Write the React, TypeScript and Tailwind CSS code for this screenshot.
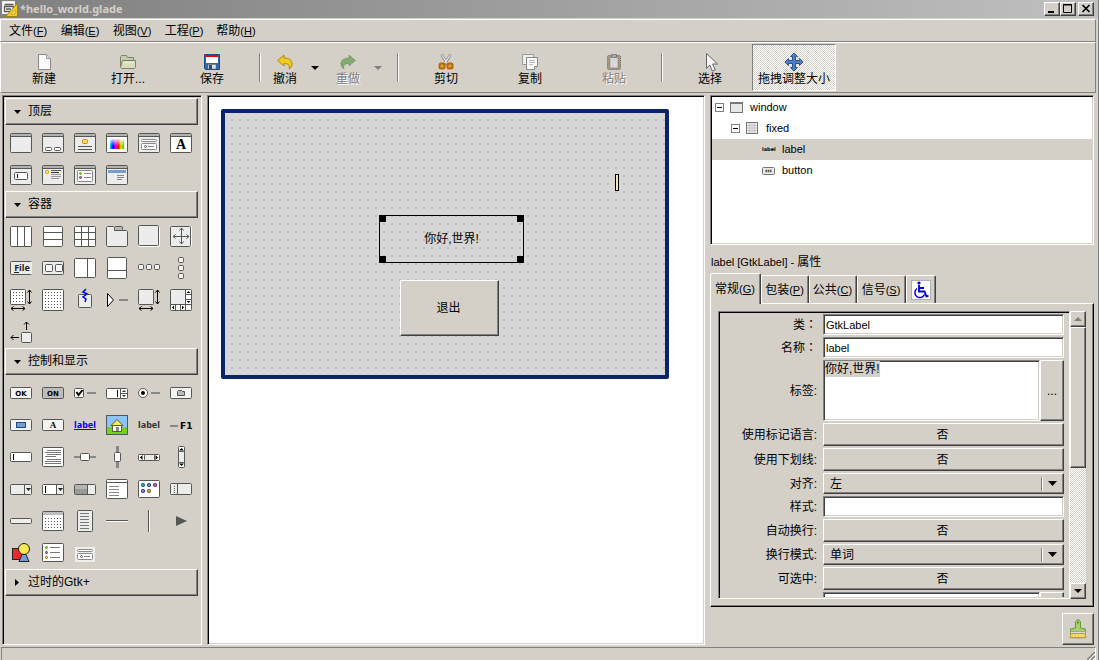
import { useEffect, useRef } from 'react';
import type { ReactNode } from 'react';

const INK = '#555753';
const FACE = '#ececec';

const outset =
  'border border-t-white border-l-white border-r-[#404040] border-b-[#404040] shadow-[inset_-1px_-1px_0_#808080] bg-[#d4d0c8]';
const inset =
  'border border-t-[#808080] border-l-[#808080] border-r-white border-b-white shadow-[inset_1px_1px_0_#000,inset_-1px_-1px_0_#d4d0c8]';
const bar =
  'border border-t-white border-l-white border-r-[#808080] border-b-[#808080]';
const checker =
  'bg-[repeating-conic-gradient(#ffffff_0_25%,#d4d0c8_0_50%)] bg-[length:2px_2px]';

/* ---------- drawing helpers ---------- */

type BoxProps = { x?: number; y?: number; w?: number; h?: number; f?: string; s?: string };
function Box({ x = 0, y = 0, w = 22, h = 22, f = FACE, s = INK }: BoxProps) {
  return <rect x={x + 0.5} y={y + 0.5} width={w - 1} height={h - 1} rx="1" fill={f} stroke={s} />;
}
function Fill({ x, y, w, h, f = INK }: { x: number; y: number; w: number; h: number; f?: string }) {
  return <rect x={x} y={y} width={w} height={h} fill={f} shapeRendering="crispEdges" />;
}
function Rows({ x, w, ys, f = INK }: { x: number; w: number; ys: number[]; f?: string }) {
  return <>{ys.map((y) => <Fill key={y} x={x} y={y} w={w} h={1} f={f} />)}</>;
}
function Cols({ y, h, xs, f = INK }: { y: number; h: number; xs: number[]; f?: string }) {
  return <>{xs.map((x) => <Fill key={x} x={x} y={y} w={1} h={h} f={f} />)}</>;
}
function Dots({ xs, ys, f = INK }: { xs: number[]; ys: number[]; f?: string }) {
  return <>{xs.flatMap((x) => ys.map((y) => <Fill key={`${x}-${y}`} x={x} y={y} w={1} h={1} f={f} />))}</>;
}
function Word({ x, y, size, f = '#000', children, serif }: { x: number; y: number; size: number; f?: string; children: string; serif?: boolean }) {
  return (
    <text x={x} y={y} fontSize={size} fontWeight="bold" fill={f} textAnchor="middle" fontFamily={serif ? 'Liberation Serif, serif' : 'DejaVu Sans, sans-serif'}>
      {children}
    </text>
  );
}
function Tag({ x = 11, y = 14, f, children }: { x?: number; y?: number; f: string; children: string }) {
  return (
    <text x={x} y={y} fontSize="9" fontWeight="bold" fill={f} textAnchor="middle" fontFamily="Noto Sans, sans-serif">
      {children}
    </text>
  );
}
function Win({ f = FACE, children }: { f?: string; children?: ReactNode }) {
  return (
    <>
      <Box y={1} h={20} f={f} />
      <Fill x={1} y={2} w={20} h={2} f="#b2b2b2" />
      <Fill x={1} y={4} w={20} h={1} />
      {children}
    </>
  );
}
const stroke = { fill: 'none', stroke: '#000', strokeWidth: 1 };
const resizeArrows = (
  <path {...stroke} d="M19.5 1v14M17.5 3.5l2-2.500 2 2.500M17.500 12.500l2 2.500 2-2.500M1 19.500h14M3.500 17.500l-2.500 2 2.500 2M12.500 17.500l2.500 2-2.500 2" />
);

/* ---------- palette icons ---------- */

const toplevels: [string, ReactNode][] = [
  ['窗口', <Win />],
  ['对话框', <Win><Box x={3} y={15} w={7} h={4} f="#fff" /><Box x={12} y={15} w={7} h={4} f="#fff" /></Win>],
  ['关于对话框', <Win><Box x={8} y={7} w={6} h={5} f="#fce94f" s="#e0761a" /><Rows x={4} w={14} ys={[14, 17]} /></Win>],
  ['颜色选择对话框', (
    <Win f="#fff">
      <defs>
        <linearGradient id="hue">
          <stop offset="0" stopColor="#00e0e0" /><stop offset=".2" stopColor="#0000ff" /><stop offset=".4" stopColor="#e000e0" />
          <stop offset=".6" stopColor="#ff0000" /><stop offset=".78" stopColor="#f0e000" /><stop offset="1" stopColor="#00e000" />
        </linearGradient>
        <linearGradient id="fade" x2="0" y2="1"><stop offset="0" stopColor="#fff" stopOpacity=".85" /><stop offset=".7" stopColor="#fff" stopOpacity="0" /></linearGradient>
      </defs>
      <rect x="4" y="7" width="14" height="10" fill="url(#hue)" /><rect x="4" y="7" width="14" height="10" fill="url(#fade)" />
    </Win>
  )],
  ['文件选择对话框', <Win><Box x={3} y={7} w={16} h={3} f="#fff" s="#8a8a8a" /><Box x={3} y={11} w={16} h={7} f="#fff" s="#8a8a8a" /><Box x={6} y={13} w={3} h={3} f="#fff" /><Fill x={10} y={14} w={6} h={1} f="#888" /></Win>],
  ['字体选择对话框', <Win f="#fff"><Word x={11} y={17} size={14} serif>A</Word></Win>],
  ['输入对话框', <Win><Box x={4} y={8} w={14} h={8} f="#fff" /><Fill x={7} y={10} w={1} h={4} f="#000" /></Win>],
  ['消息对话框', <Win><Box x={3} y={6} w={4} h={4} f="#fce94f" s="#c4a000" /><Rows x={9} w={10} ys={[6]} /><Fill x={9} y={8} w={8} h={1} f="#333" /><Rows x={9} w={10} ys={[10, 12]} f="#999" /><Fill x={9} y={14} w={8} h={1} f="#999" /></Win>],
  ['最近文件对话框', <Win><Box x={3} y={6} w={16} h={12} f="#fff" s="#888" /><Box x={5} y={8} w={3} h={3} f="#8ae234" s="#4e9a06" /><Box x={5} y={12} w={3} h={3} f="#ad7fa8" s="#5c3566" /><Rows x={10} w={7} ys={[9, 13]} f="#888" /></Win>],
  ['向导', <Win><Fill x={2} y={6} w={18} h={3} f="#729fcf" /><Rows x={11} w={7} ys={[11, 13]} f="#888" /><Fill x={11} y={15} w={5} h={1} f="#888" /></Win>],
];

const smallBoxes = [0, 8, 16];

const containers: [string, ReactNode][] = [
  ['水平框', <><Box y={1} h={21} f="#fff" /><Cols y={1} h={20} xs={[7, 14]} /></>],
  ['垂直框', <><Box x={1} y={1} w={20} h={21} f="#fff" /><Rows x={1} w={20} ys={[7, 14]} /></>],
  ['表格', <><Box y={1} h={21} f="#fff" /><Cols y={1} h={20} xs={[7, 14]} /><Rows x={1} w={20} ys={[7, 14]} /></>],
  ['笔记本', <><Box x={8} y={1} w={9} h={5} f="#b8b8b8" /><path d="M.5 20.500V2.500l1-1h6l1 1v3h12l1 1v14l-1 1h-19z" fill={FACE} stroke={INK} /></>],
  ['框架', <><Box y={1} w={22} h={21} f="#fff" s="#fff" /><Box y={0} w={21} h={21} /></>],
  ['固定', <><Box y={1} w={22} h={21} f="#fff" s="#fff" /><Box w={21} h={21} y={1} /><path fill="none" stroke={INK} d="M11.500 3v16M3 11.500h16M9.500 5.500l2-2.500 2 2.500M9.500 16.500l2 2.500 2-2.500M5.500 9.500l-2.500 2 2.500 2M16.500 9.500l2.500 2-2.500 2" /></>],
  ['菜单条', <><Box y={4} h={14} /><Fill x={21} y={5} w={1} h={12} f={FACE} /><Tag x={12} f="#222">File</Tag><Fill x={4} y={15} w={5} h={1} f="#222" /></>],
  ['工具条', <><Box y={4} h={14} /><Box x={3} y={7} w={8} h={8} f="#f5f5f5" /><Box x={13} y={7} w={8} h={8} f="#f5f5f5" /></>],
  ['水平窗格', <><Box y={1} h={20} f="#fff" /><Cols y={1} h={20} xs={[13]} /></>],
  ['垂直窗格', <><Box x={1} w={20} f="#fff" /><Rows x={1} w={20} ys={[13]} /></>],
  ['水平按钮框', <>{smallBoxes.map((p) => <Box key={p} x={p} y={7} w={6} h={6} f="#f5f5f5" />)}</>],
  ['垂直按钮框', <>{smallBoxes.map((p) => <Box key={p} x={8} y={p} w={6} h={6} f="#f5f5f5" />)}</>],
  ['布局', <><Box w={16} h={16} f="#fff" /><Dots xs={[3, 6, 9, 12]} ys={[3, 6, 9, 12]} />{resizeArrows}</>],
  ['固定点阵', <><Box f="#fff" /><Dots xs={[3, 6, 9, 12, 15, 18]} ys={[3, 6, 9, 12, 15, 18]} /></>],
  ['事件框', <><Box x={4} y={5} w={14} h={14} /><path fill="none" stroke="#00f" strokeWidth="1.500" d="M12 0L9 3l4 2-4 3 3 2-1 3" /></>],
  ['扩展器', <><path d="M1.500 4.500v13l6-6.500z" fill="#fff" stroke="#000" /><Fill x={13} y={10} w={9} h={2} f="#888" /></>],
  ['视口', <><Box w={16} h={16} />{resizeArrows}</>],
  ['滚动窗口', <><Box f="#fff" /><Fill x={1} y={1} w={14} h={14} f={FACE} /><Fill x={15} y={1} w={1} h={20} /><Fill x={1} y={15} w={20} h={1} /><Rows x={16} w={5} ys={[5, 10]} /><Cols y={16} h={5} xs={[5, 10]} /><path d="M16.500 4h4l-2-2zM16.500 12h4l-2 2zM4 16.500v4l-2-2zM12 16.500v4l2-2z" fill="#000" /></>],
  ['对齐', <><Box x={11} y={11} w={11} h={11} /><path {...stroke} d="M16.500 1v8M14 3.500L16.500 1 19 3.500M1 16.500h8M3.500 14L1 16.500 3.500 19" /></>],
];

const rasters: [number, number, string, string][] = [
  [3, 5, '#20a0a0', '#0a6060'], [9, 5, '#5a8ac8', '#102a80'], [15, 5, '#b060c0', '#5c1066'], [3, 11, '#7080e0', '#1020a0'], [9, 11, '#c8a060', '#6a4a10'],
];

const controls: [string, ReactNode][] = [
  ['按钮', <><Box y={5} h={12} f="#f4f4f4" /><Word x={11} y={14} size={7}>OK</Word></>],
  ['开关按钮', <><Box y={5} h={12} f="#bdbdbd" /><Word x={11} y={14} size={7}>ON</Word></>],
  ['复选按钮', <><Box y={6} w={10} h={10} f="#fff" /><path d="M2.500 10l2 3 4-5" fill="none" stroke="#000" strokeWidth="2" /><Fill x={13} y={10} w={9} h={2} f="#888" /></>],
  ['微调按钮', <><Box y={6} h={11} f="#fff" /><Cols y={7} h={9} xs={[14]} /><Fill x={11} y={8} w={1} h={7} f="#000" /><Fill x={15} y={11} w={6} h={1} /><path d="M16 10h4l-2-2zM16 13h4l-2 2z" fill="#333" /></>],
  ['单选按钮', <><circle cx="5" cy="11" r="4.500" fill="#fff" stroke={INK} /><circle cx="5" cy="11" r="2" /><Fill x={13} y={10} w={9} h={2} f="#888" /></>],
  ['文件选择按钮', <><Box y={5} h={12} f="#f4f4f4" /><path d="M7.500 13.500v-4l1-1h3l1 1h2v4z" fill="#bbb" stroke={INK} /></>],
  ['颜色按钮', <><Box y={5} h={12} f="#f4f4f4" /><rect x="6.500" y="8.500" width="9" height="5" fill="#729fcf" stroke="#204a87" /></>],
  ['字体按钮', <><Box y={5} h={12} f="#f4f4f4" /><Word x={11} y={14} size={9} serif>A</Word></>],
  ['链接按钮', <><Tag f="#00f">label</Tag><Fill x={0} y={15} w={22} h={1} f="#00f" /></>],
  ['图像', <><rect x=".500" y="1.500" width="21" height="19" fill="#8cc4ff" stroke={INK} /><Fill x={1} y={13} w={20} h={7} f="#73d216" /><path d="M6.500 11.500h9v6h-9z" fill="#fff" stroke={INK} /><path d="M5 11.500L11 5.500l6 6z" fill="#fce94f" stroke={INK} /><Fill x={10} y={13} w={3} h={4} f="#888" /></>],
  ['标签', <Tag f="#333">label</Tag>],
  ['快捷键标签', <><Fill x={0} y={11} w={8} h={2} f="#888" /><text x="10" y="15" fontSize="9" fontWeight="bold" fontFamily="DejaVu Sans, sans-serif">F1</text></>],
  ['文本输入', <><Box y={6} h={10} f="#fff" /><Fill x={3} y={8} w={1} h={6} f="#000" /></>],
  ['文本视图', <><Box y={1} h={20} f="#fff" /><Rows x={5} w={14} ys={[4, 8, 13]} f="#777" /><Rows x={3} w={16} ys={[6, 15, 17]} f="#777" /><Rows x={3} w={11} ys={[10]} f="#777" /></>],
  ['水平刻度', <><Fill x={0} y={10} w={22} h={2} f="#888" /><Box x={6} y={7} w={10} h={8} f="#fff" /></>],
  ['垂直刻度', <><Fill x={10} y={0} w={3} h={22} f="#888" /><Box x={8} y={6} w={7} h={10} f="#fff" /></>],
  ['水平滚动条', <><Box y={8} h={7} f="#fff" /><Box x={6} y={8} w={11} h={7} /><path d="M4.500 9v5L2 11.500zM17.500 9v5l2.500-2.500z" fill="#000" /></>],
  ['垂直滚动条', <><Box x={8} w={7} f="#fff" /><Box x={8} y={5} w={7} h={12} /><path d="M9 4.500h5L11.500 2zM9 17.500h5L11.500 20z" fill="#000" /></>],
  ['组合框', <><Box y={6} h={11} /><Cols y={7} h={9} xs={[14]} /><path d="M16 10h5l-2.500 3z" fill="#222" /></>],
  ['可输入组合框', <><Box y={6} h={11} f="#fff" /><Fill x={15} y={7} w={6} h={9} f={FACE} /><Cols y={7} h={9} xs={[14]} /><Fill x={3} y={8} w={1} h={7} f="#000" /><path d="M16 10h5l-2.500 3z" fill="#222" /></>],
  ['进度条', <><Box y={6} h={11} /><Fill x={1} y={7} w={12} h={4} f="#b5b5b5" /><Fill x={1} y={11} w={12} h={5} f="#999" /><Cols y={7} h={9} xs={[13]} /></>],
  ['树视图', <><Box y={1} h={20} f="#fff" /><Rows x={1} w={20} ys={[4]} /><Rows x={3} w={10} ys={[8, 11, 14, 17]} f="#888" /></>],
  ['图标视图', <><Box y={2} h={18} f="#fff" />{rasters.map(([x, y, c, s]) => <Box key={`${x}-${y}`} x={x} y={y} w={4} h={4} f={c} s={s} />)}</>],
  ['把手框', <><Box y={5} h={12} /><Cols y={6} h={10} xs={[7]} /><Dots xs={[4]} ys={[8, 10, 12, 14]} /></>],
  ['状态栏', <Box y={8} h={6} f="#eeeeec" />],
  ['日历', <><Box y={1} h={20} f="#fff" /><Fill x={1} y={2} w={20} h={3} f="#bdbdbd" /><Dots xs={[3, 6, 9, 12, 15, 18]} ys={[8, 11, 14, 17]} /></>],
  ['菜单', <><Box x={3} w={16} /><Rows x={6} w={9} ys={[3, 6, 9, 12, 15, 18]} f="#777" /></>],
  ['水平分隔', <><Fill x={0} y={10} w={22} h={1} /><Fill x={0} y={11} w={22} h={1} f="#fff" /></>],
  ['垂直分隔', <><Fill x={10} y={0} w={1} h={22} /><Fill x={11} y={0} w={1} h={22} f="#fff" /></>],
  ['箭头', <path d="M6 6v10l11-5z" fill={INK} />],
  ['绘图区', <><rect x="2.500" y="6.500" width="11" height="11" fill="#ef2929" stroke="#222" /><circle cx="14" cy="7" r="5.500" fill="#fce94f" stroke="#222" /><path d="M12 12.500h4l3 7h-10z" fill="#729fcf" stroke="#222" /></>],
  ['最近文件', <><Box y={1} h={19} f="#fff" /><Box x={3} y={4} w={3} h={3} f="#8ae234" s="#4e9a06" /><Box x={3} y={9} w={3} h={3} f="#ad7fa8" s="#5c3566" /><Box x={3} y={14} w={3} h={3} f="#fcaf3e" s="#a06010" /><Rows x={8} w={10} ys={[5, 10, 15]} f="#777" /></>],
  ['文件选择器', <><Fill x={1} y={5} w={20} h={15} f="#eeeeec" /><Box x={3} y={7} w={16} h={3} f="#fff" s="#8a8a8a" /><Box x={3} y={11} w={16} h={7} f="#fff" s="#8a8a8a" /><Box x={6} y={13} w={3} h={3} f="#fff" /><Fill x={10} y={14} w={6} h={1} f="#888" /></>],
];

function Section({ title, items }: { title: ReactNode; items?: [string, ReactNode][] }) {
  return (
    <section>
      <button aria-expanded={!!items} className={`flex h-[27px] w-full items-center gap-[7px] pb-px pl-2 text-left leading-4 ${outset}`}>
        <svg width="7" height="7" viewBox="0 0 7 7">
          <path d={items ? 'M0 2h7L3.500 6z' : 'M1 0v7l4-3.500z'} fill="#000" />
        </svg>
        {title}
      </button>
      {items && (
        <div className="flex flex-wrap pt-[2px]">
          {items.map(([name, art]) => (
            <button key={name} aria-label={name} className="flex h-8 w-8 items-center justify-center">
              <svg width="22" height="22" viewBox="0 0 22 22" overflow="visible">{art}</svg>
            </button>
          ))}
        </div>
      )}
    </section>
  );
}

/* ---------- toolbar ---------- */

const art = {
  create: <><path d="M2.500 .500h8l4 4v11h-12z" fill="#fafafa" stroke="#888" /><path d="M10.500 .500v4h4" fill="#ddd" stroke="#999" /></>,
  open: <><path d="M.500 14V2.500l1-1h5l1 2h6v4" fill="#c8ccae" stroke="#7f8560" /><path d="M2.500 6.500h13v7l-1 1H1.500L.500 13.500z" fill="#d8dcc0" stroke="#7f8560" /><path d="M3 8.500h11" stroke="#eef0dd" /></>,
  save: <><path d="M.500 .500h15v15H1.500l-1-1z" fill="#3465a4" stroke="#204a87" /><path d="M2 1h12v8H2z" fill="#fff" /><path d="M2 1h12v2H2z" fill="#e00" /><path d="M4 10.500h8V15H4z" fill="#e0e0e0" stroke="#666" strokeWidth=".500" /><path d="M5 11h3v4H5z" fill="#204a87" /></>,
  undo: <path d="M.700 6.500L7 1v3c5 0 8 2 8 6 0 2-1 4-3 5 1-3 0-5.500-5-5.500V12z" fill="#f0cc20" stroke="#b08a00" />,
  redo: <path d="M15.300 6.500L9 1v3C4 4 1 6 1 10c0 2 1 4 3 5-1-3 0-5.500 5-5.500V12z" fill="#84aa70" stroke="#5e8a4c" strokeDasharray="1 1" />,
  cut: <><path d="M3.500 .500l6 10M12.500 .500l-6 10" stroke="#888" strokeWidth="2.600" /><path d="M3.700 1l6 9M12.300 1l-6 9" stroke="#eee" strokeWidth="1.200" /><rect x="1.500" y="9.500" width="5" height="5" rx="1.500" fill="#d4a050" stroke="#b86a00" strokeWidth="2" /><rect x="9.500" y="9.500" width="5" height="5" rx="1.500" fill="#d4a050" stroke="#b86a00" strokeWidth="2" /></>,
  copy: <><path d="M.500 .500h11v10H.500z" fill="#eee" stroke="#999" /><path d="M4.500 3.500h11v9l-3 3h-8z" fill="#fafafa" stroke="#888" /><path d="M7 6.500h6M7 8.500h6M7 10.500h4" stroke="#bbb" /><path d="M12.500 15.500v-3h3" fill="#ddd" stroke="#888" /></>,
  paste: <><rect x="1.500" y="1.500" width="13" height="14" rx="1" fill="#a89878" stroke="#666" strokeDasharray="1 1" /><path d="M4 3h8v11H4z" fill="#d8d8dc" stroke="#777" strokeWidth=".500" /><path d="M5.500 .500h5v3h-5z" fill="#aaa" stroke="#666" strokeWidth=".700" /></>,
  select: <path d="M4.500 -.500v15l3.300-3.500 2.500 6 3-1.200-2.700-5.800h5z" fill="#f4f4f4" stroke="#666" />,
  move: <path d="M8-1l3.500 3.500h-2V6.500h4v-2L17 8l-3.500 3.500v-2h-4v4h2L8 17l-3.500-3.500h2v-4h-4v2L-1 8l3.500-3.500v2h4v-4h-2z" fill="#4a80c8" stroke="#204a87" strokeWidth=".900" />,
};

function Tool({ icon, label, size = 'w-[84px]', state }: { icon: keyof typeof art; label: string; size?: string; state?: 'off' | 'on' }) {
  const look =
    state === 'on'
      ? `border border-t-[#808080] border-l-[#808080] border-r-white border-b-white ${checker}`
      : state === 'off'
        ? 'border border-transparent text-[#808080] [text-shadow:1px_1px_0_#fff]'
        : 'border border-transparent';
  return (
    <button disabled={state === 'off'} aria-pressed={state === 'on'} className={`flex h-[47px] shrink-0 flex-col items-center gap-px whitespace-nowrap pt-[9px] ${size} ${look}`}>
      <svg width="16" height="16" viewBox="0 0 16 16" overflow="visible">{art[icon]}</svg>
      <span className="leading-4">{label}</span>
    </button>
  );
}
function Drop({ off, label }: { off?: boolean; label: string }) {
  return (
    <button disabled={off} aria-label={label} className={`flex h-[47px] w-[25px] items-center pl-[7px] ${off ? 'text-[#808080]' : 'text-black'}`}>
      <svg width="8" height="4" viewBox="0 0 8 4"><path d="M0 0h8L4 4z" fill="currentColor" /></svg>
    </button>
  );
}
function Sep() {
  return (
    <div className="flex w-3 shrink-0 justify-center">
      <div className="h-[29px] w-[2px] border-l border-[#808080] bg-white" />
    </div>
  );
}

/* ---------- properties ---------- */

function Row({ id, label, children }: { id: string; label?: ReactNode; children: ReactNode }) {
  return (
    <div className="flex shrink-0 items-center gap-[6px]">
      <div className="w-[97px] shrink-0 text-right leading-4">{label && <label htmlFor={id}>{label}</label>}</div>
      <div className="flex min-w-0 flex-1">{children}</div>
    </div>
  );
}
const field =
  'w-full min-w-0 rounded-none border border-t-[#808080] border-l-[#808080] border-r-white border-b-white bg-white shadow-[inset_1px_1px_0_#404040,inset_-1px_-1px_0_#d4d0c8] outline-none';

function TextField({ id, label, value }: { id: string; label: ReactNode; value: string }) {
  return (
    <Row id={id} label={label}>
      <input id={id} defaultValue={value} className={`h-[21px] px-[2px] text-[11px] ${field}`} />
    </Row>
  );
}
function Toggle({ id, label }: { id: string; label: string }) {
  return (
    <Row id={id} label={label}>
      <button id={id} className={`h-[23px] w-full pr-[2px] leading-4 ${outset}`}>否</button>
    </Row>
  );
}
function Combo({ id, label, value }: { id: string; label: string; value: string }) {
  return (
    <Row id={id} label={label}>
      <div className="relative w-full">
        <select id={id} className={`block h-[21px] w-full appearance-none rounded-none pl-[6px] leading-4 outline-none ${outset}`}>
          <option>{value}</option>
        </select>
        <span className="pointer-events-none absolute inset-y-0 right-[7px] flex items-center gap-[5px]">
          <span className="h-[14px] w-[2px] border-l border-[#808080] bg-white" />
          <svg width="9" height="5" viewBox="0 0 9 5"><path d="M0 0h9L4.500 5z" /></svg>
        </span>
      </div>
    </Row>
  );
}

function Mnemonic({ text, k }: { text: string; k: string }) {
  return <>{text}<span className="text-[11px]">(<u>{k}</u>)</span></>;
}
const wideColon = <span className="font-['Noto_Sans_CJK_TC',sans-serif]" lang="zh-TW">：</span>;

function Properties() {
  const text = useRef<HTMLTextAreaElement>(null);
  useEffect(() => {
    text.current?.focus({ preventScroll: true });
    text.current?.select();
  }, []);
  return (
    <div className="flex min-h-0 flex-1 border border-t-white border-l-white border-r-black border-b-black p-[7px] shadow-[inset_-1px_-1px_0_#808080]">
      <div className={`flex min-w-0 flex-1 p-px ${inset}`}>
        <div className="flex min-w-0 flex-1 flex-col gap-[2px] overflow-y-auto pr-[4px] pt-px [scrollbar-width:none]">
          <TextField id="class" label={<>类{wideColon}</>} value="GtkLabel" />
          <TextField id="name" label={<>名称{wideColon}</>} value="label" />
          <Row id="text" label="标签:">
            <textarea id="text" ref={text} defaultValue="你好,世界!" className={`h-[61px] resize-none overflow-hidden px-px leading-4 selection:bg-[#d4d0c8] selection:text-black ${field}`} />
            <button aria-label="编辑文本" className={`w-6 shrink-0 ${outset}`}>...</button>
          </Row>
          <Toggle id="markup" label="使用标记语言:" />
          <Toggle id="underline" label="使用下划线:" />
          <Combo id="justify" label="对齐:" value="左" />
          <TextField id="pattern" label="样式:" value="" />
          <Toggle id="wrap" label="自动换行:" />
          <Combo id="wrapmode" label="换行模式:" value="单词" />
          <Toggle id="selectable" label="可选中:" />
          <Row id="tip">
            <textarea id="tip" aria-label="工具提示" className={`h-[61px] resize-none ${field}`} />
            <button aria-label="编辑工具提示" className={`w-6 shrink-0 ${outset}`} />
          </Row>
        </div>
      </div>
      <div className={`flex w-4 flex-col ${checker}`}>
        <button aria-label="向上" className={`flex h-4 items-center justify-center text-[#808080] ${outset}`}>
          <svg width="8" height="4" viewBox="0 0 8 4"><path d="M0 4h8L4 0z" fill="currentColor" /></svg>
        </button>
        <div className={`h-[141px] ${outset}`} />
        <button aria-label="向下" className={`mt-auto flex h-4 items-center justify-center ${outset}`}>
          <svg width="8" height="4" viewBox="0 0 8 4"><path d="M0 0h8L4 4z" /></svg>
        </button>
      </div>
    </div>
  );
}

function Tab({ children, active, width }: { children: ReactNode; active?: boolean; width: string }) {
  return (
    <button
      role="tab"
      aria-selected={!!active}
      className={`${active ? '-mb-px h-[31px] z-10' : 'h-[28px]'} ${width} flex items-center justify-center whitespace-nowrap rounded-t-[2px] border border-b-0 border-t-white border-l-white border-r-[#404040] bg-[#d4d0c8] pr-px shadow-[inset_-1px_0_0_#808080]`}
    >
      <span>{children}</span>
    </button>
  );
}

/* ---------- widget tree ---------- */

function Minus() {
  return (
    <svg width="9" height="9" viewBox="0 0 9 9" className="shrink-0">
      <rect x=".500" y=".500" width="8" height="8" fill="#fff" stroke="#808080" /><path d="M2 4.500h5" stroke="#000" />
    </svg>
  );
}
const tree: { name: string; pad: string; open?: boolean; selected?: boolean; icon: ReactNode }[] = [
  { name: 'window', pad: 'pl-[3px]', open: true, icon: <><rect x=".500" y="1.500" width="12" height="10" fill="#e8e8e8" stroke="#777" /><path d="M1 2.500h11" stroke="#777" /></> },
  { name: 'fixed', pad: 'pl-[19px]', open: true, icon: <><rect x=".500" y=".500" width="11" height="11" fill="#eee" stroke="#777" /><path d="M3.500 1v10M6 1v10M8.500 1v10M1 3.500h10M1 6h10M1 8.500h10" stroke="#bbb" strokeWidth=".800" /></> },
  { name: 'label', pad: 'pl-[50px]', selected: true, icon: <text x="0" y="8" fontSize="5" fontWeight="bold" fontFamily="DejaVu Sans, sans-serif" fill="#000">label</text> },
  { name: 'button', pad: 'pl-[50px]', icon: <><rect x=".500" y="3.500" width="12" height="7" rx="1" fill="#e8e8e8" stroke="#777" /><path d="M3.500 7h6" stroke="#555" strokeWidth="2.400" strokeDasharray="1.600 .600" /></> },
];

/* ---------- window ---------- */

const menus: [string, string][] = [['文件', 'F'], ['编辑', 'E'], ['视图', 'V'], ['工程', 'P'], ['帮助', 'H']];
const handles = ['left-0 top-0', 'right-0 top-0', 'left-0 bottom-0', 'right-0 bottom-0'];

export default function App() {
  return (
    <div className="flex h-screen flex-col overflow-hidden border-r border-[#808080] bg-[#d4d0c8] font-['Liberation_Sans','Noto_Sans_CJK_SC',sans-serif] text-xs text-black" lang="zh-CN">
      <header className="flex h-[18px] shrink-0 items-center bg-linear-to-r from-[#808080] to-[#c0c0c0] pl-[2px] pr-[4px]">
        <svg width="16" height="16" viewBox="0 0 16 16">
          <rect x=".500" y=".500" width="12" height="12" fill="#fff" stroke="#eee" />
          <path d="M2.500 3.500h9M2.500 5.500h9v5h-9zM4 8h5" fill="none" stroke="#555" strokeWidth="1.300" />
          <path d="M15.500 2.500v13h-12z" fill="#f0cc20" stroke="#a88400" /><path d="M13 9v4H9z" fill="#fff3a0" stroke="#a88400" strokeWidth=".600" />
        </svg>
        <h1 className="ml-[2px] flex-1 font-['Noto_Sans',sans-serif] text-[11px] font-bold leading-4 text-[#d4d0c8]">*hello_world.glade</h1>
        <button aria-label="最小化" className={`h-[14px] w-4 ${outset}`}><svg width="14" height="12" viewBox="0 0 14 12"><Fill x={3} y={8} w={6} h={2} f="#000" /></svg></button>
        <button aria-label="最大化" className={`h-[14px] w-4 ${outset}`}><svg width="14" height="12" viewBox="0 0 14 12"><path d="M2.500 1.500h8v8h-8zM2 2h9" fill="none" stroke="#000" /></svg></button>
        <button aria-label="关闭" className={`ml-[2px] h-[14px] w-4 ${outset}`}><svg width="14" height="12" viewBox="0 0 14 12"><path d="M3.500 2l7 7M10.500 2l-7 7" stroke="#000" strokeWidth="1.700" /></svg></button>
      </header>

      <nav className={`mr-[2px] mt-px flex h-[23px] shrink-0 pl-px ${bar}`}>
        {menus.map(([text, k]) => (
          <button key={k} className="w-[52px] whitespace-nowrap leading-4"><Mnemonic text={text} k={k} /></button>
        ))}
      </nav>

      <div role="toolbar" className={`mr-[2px] flex h-[51px] shrink-0 items-center pl-px ${bar}`}>
        <Tool icon="create" label="新建" />
        <Tool icon="open" label="打开..." />
        <Tool icon="save" label="保存" />
        <Sep />
        <Tool icon="undo" label="撤消" size="w-[38px]" />
        <Drop label="撤消历史" />
        <Tool icon="redo" label="重做" size="w-[38px]" state="off" />
        <Drop label="重做历史" off />
        <Sep />
        <Tool icon="cut" label="剪切" />
        <Tool icon="copy" label="复制" />
        <Tool icon="paste" label="粘贴" state="off" />
        <Sep />
        <Tool icon="select" label="选择" />
        <Tool icon="move" label="拖拽调整大小" state="on" />
      </div>

      <main className="flex min-h-0 flex-1 gap-[5px] pl-[2px] pr-[4px] pt-[2px]">
        <aside className={`w-[200px] shrink-0 overflow-hidden py-[2px] pl-[2px] pr-[3px] ${inset}`}>
          <Section title="顶层" items={toplevels} />
          <Section title="容器" items={containers} />
          <Section title="控制和显示" items={controls} />
          <Section title={<span>过时的Gtk+</span>} />
        </aside>

        <div className={`min-w-0 flex-1 overflow-hidden bg-white pl-[13px] pt-[13px] ${inset}`}>
          <div className="relative h-[270px] w-[448px] rounded-[2px] border-4 border-[#0a246a]">
            <div className="h-full bg-[conic-gradient(from_90deg_at_6px_6px,#bebebe_25%,#d6d6d6_0)] bg-[length:8px_8px]" />
            <div className="absolute left-[154px] top-[102px] flex h-[48px] w-[145px] items-center justify-center border border-black">
              你好,世界!
              {handles.map((h) => <span key={h} className={`absolute h-[6px] w-[6px] bg-black ${h}`} />)}
            </div>
            <button className={`absolute left-[175px] top-[167px] h-[56px] w-[99px] pr-[2px] ${outset}`}>退出</button>
            <div className="absolute left-[390px] top-[61px] h-[17px] w-1 border border-black bg-[#f5e6b4]" />
          </div>
        </div>

        <div className="flex w-[384px] shrink-0 flex-col">
          <ul role="tree" className={`h-[150px] shrink-0 bg-white p-px ${inset}`}>
            {tree.map((n) => (
              <li key={n.name} role="treeitem" aria-selected={!!n.selected} className={`flex h-[21px] items-center gap-[6px] text-[11px] ${n.pad} ${n.selected ? 'bg-[#d4d0c8]' : ''}`}>
                {n.open && <Minus />}
                <svg width="14" height="13" viewBox="0 0 14 13" className="shrink-0">{n.icon}</svg>
                <span>{n.name}</span>
              </li>
            ))}
          </ul>
          <h2 className="flex h-[28px] shrink-0 items-center whitespace-pre pl-px pt-[6px]">
            <span className="text-[11px]">label [GtkLabel] - </span>属性
          </h2>
          <div role="tablist" className="flex h-[30px] shrink-0 items-end">
            <Tab active width="w-[51px]"><Mnemonic text="常规" k="G" /></Tab>
            <Tab width="w-[48px]"><Mnemonic text="包装" k="P" /></Tab>
            <Tab width="w-[48px]"><Mnemonic text="公共" k="C" /></Tab>
            <Tab width="w-[49px]"><Mnemonic text="信号" k="S" /></Tab>
            <Tab width="w-[30px]">
              <svg width="20" height="20" viewBox="0 0 20 20" role="img" aria-label="无障碍">
                <rect x=".500" y=".500" width="19" height="19" fill="#fff" stroke="#b0b0b0" />
                <circle cx="8" cy="3" r="1.600" fill="#0000d0" />
                <path d="M8 5v6.500h5.500l2 5 2-.800M8 8h5" fill="none" stroke="#0000d0" strokeWidth="1.800" />
                <path d="M6 8.500a5 5 0 1 0 7.500 6" fill="none" stroke="#0000d0" strokeWidth="1.500" />
              </svg>
            </Tab>
          </div>
          <Properties />
          <button aria-label="清除" className={`ml-auto mt-[6px] flex h-8 w-8 shrink-0 items-center justify-center ${outset}`}>
            <svg width="20" height="20" viewBox="0 0 20 20">
              <ellipse cx="10" cy="18.500" rx="9" ry="1.200" fill="#a8a49c" />
              <path d="M7.500 9V2.500q2.500-3.500 5 0V9l5 1v4h-15v-4z" fill="#a4cf6c" stroke="#6a9a3c" />
              <circle cx="10" cy="3.500" r="1" fill="#50702c" />
              <path d="M2.500 12.500h15v2h-15z" fill="#ddd" stroke="#888" strokeWidth=".600" />
              <path d="M2.500 14.500h14.500l1 4h-15.500z" fill="#e8cc58" stroke="#b8982c" strokeWidth=".800" />
              <path d="M6 15v3M9 15v3M12 15v3M15 15v3" stroke="#fff0a0" />
            </svg>
          </button>
        </div>
      </main>

      <footer className="ml-px mr-[2px] mt-[2px] flex h-[13px] shrink-0 items-end justify-end border border-b-0 border-t-[#808080] border-l-[#808080] border-r-white">
        <svg width="8" height="8" viewBox="0 0 8 8"><path d="M0 8l8-8M4 8l4-4" stroke="#808080" strokeWidth="1.500" /><path d="M2 8l6-6M6 8l2-2" stroke="#fff" /></svg>
      </footer>
    </div>
  );
}
